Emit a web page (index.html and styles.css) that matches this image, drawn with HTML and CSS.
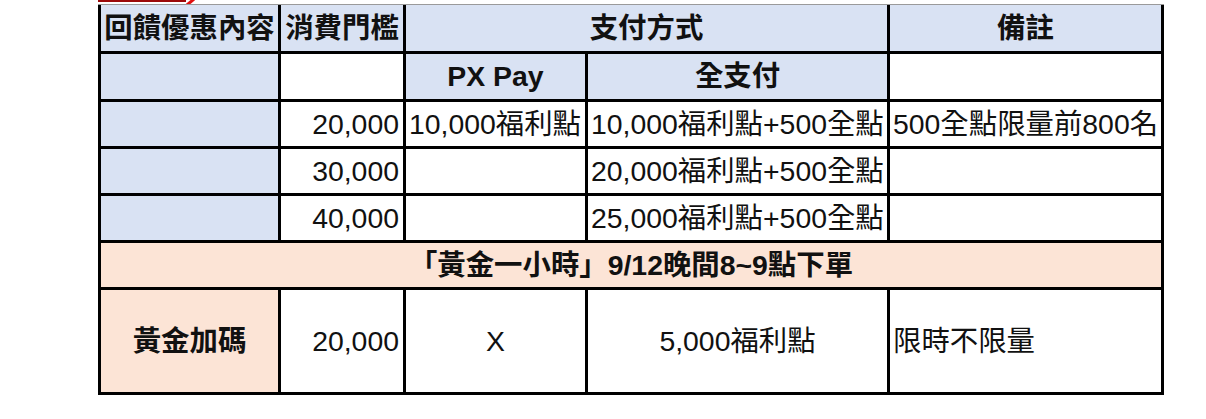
FILE: index.html
```html
<!DOCTYPE html>
<html lang="zh-Hant">
<head>
<meta charset="utf-8">
<title>回饋優惠</title>
<link rel="stylesheet" href="styles.css">
</head>
<body>
<div class="page">
  <svg class="topmark" width="110" height="4" viewBox="0 0 110 4">
    <rect x="0" y="0" width="88" height="2" fill="#9c0a0a"/>
    <path d="M96 -1 L89 5" stroke="#e01010" stroke-width="3"/>
  </svg>
  <div class="sheet">
    <div class="cell blue bold center">回饋優惠內容</div>
    <div class="cell blue bold center">消費門檻</div>
    <div class="cell blue bold center span2">支付方式</div>
    <div class="cell blue bold center">備註</div>

    <div class="cell blue"></div>
    <div class="cell"></div>
    <div class="cell blue bold center">PX Pay</div>
    <div class="cell blue bold center">全支付</div>
    <div class="cell"></div>

    <div class="cell blue"></div>
    <div class="cell right">20,000</div>
    <div class="cell left">10,000福利點</div>
    <div class="cell left">10,000福利點+500全點</div>
    <div class="cell left">500全點限量前800名</div>

    <div class="cell blue"></div>
    <div class="cell right">30,000</div>
    <div class="cell"></div>
    <div class="cell left">20,000福利點+500全點</div>
    <div class="cell"></div>

    <div class="cell blue"></div>
    <div class="cell right">40,000</div>
    <div class="cell"></div>
    <div class="cell left">25,000福利點+500全點</div>
    <div class="cell"></div>

    <div class="cell peach bold center span5">「黃金一小時」9/12晚間8~9點下單</div>

    <div class="cell peach bold center">黃金加碼</div>
    <div class="cell right">20,000</div>
    <div class="cell center">X</div>
    <div class="cell center">5,000福利點</div>
    <div class="cell left">限時不限量</div>
  </div>
</div>
</body>
</html>
```

FILE: styles.css
```css
html, body {
  margin: 0;
  padding: 0;
  background: #ffffff;
}

.page {
  padding-left: 98px;
  font-family: "Liberation Sans", "Noto Sans CJK TC", sans-serif;
  font-size: 28.4px;
  color: #111111;
}

.topmark {
  display: block;
  height: 4px;
}

.sheet {
  display: grid;
  width: max-content;
  grid-template-columns: 177px 122px 179px 299px 271px;
  grid-template-rows: 46px 45px 44px 44px 44px 44px 102px;
  gap: 3px;
  padding: 0 3px 3px 3px;
  background: #000000;
  border-top: 1px solid #9a9a9a;
}

.cell {
  background: #ffffff;
  display: flex;
  align-items: center;
  white-space: nowrap;
  overflow: visible;
  line-height: 1;
}

.blue { background: #d9e2f3; }
.peach { background: #fce4d6; }
.bold { font-weight: 700; }

.center { justify-content: center; }
.left { justify-content: flex-start; padding-left: 3px; }
.right { justify-content: flex-end; padding-right: 4px; }

.span2 { grid-column: span 2; }
.span5 { grid-column: span 5; }
```
